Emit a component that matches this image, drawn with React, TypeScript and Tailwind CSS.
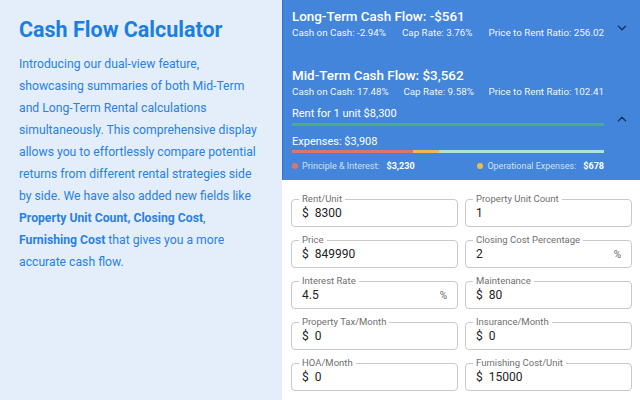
import { ChevronDown, ChevronUp } from "lucide-react";

type Field = {
  label: string;
  value: string;
  prefix?: string;
  suffix?: string;
};

const fields: Field[] = [
  { label: "Rent/Unit", value: "8300", prefix: "$" },
  { label: "Property Unit Count", value: "1" },
  { label: "Price", value: "849990", prefix: "$" },
  { label: "Closing Cost Percentage", value: "2", suffix: "%" },
  { label: "Interest Rate", value: "4.5", suffix: "%" },
  { label: "Maintenance", value: "80", prefix: "$" },
  { label: "Property Tax/Month", value: "0", prefix: "$" },
  { label: "Insurance/Month", value: "0", prefix: "$" },
  { label: "HOA/Month", value: "0", prefix: "$" },
  { label: "Furnishing Cost/Unit", value: "15000", prefix: "$" },
];

function Stats({ coc, cap, ptr }: { coc: string; cap: string; ptr: string }) {
  return (
    <div className="flex justify-between text-[9.8px] leading-[12px] text-white/95">
      <span>Cash on Cash: {coc}</span>
      <span>Cap Rate: {cap}</span>
      <span>Price to Rent Ratio: {ptr}</span>
    </div>
  );
}

function OutlinedField({ field }: { field: Field }) {
  return (
    <div className="relative flex h-[28px] items-center rounded-[4px] border border-[#c9c9c9] px-[10px] text-[12px] text-[#222]">
      <span className="absolute -top-[7px] left-[7px] bg-white px-[3px] text-[9.5px] leading-[12px] text-[#6f6f6f]">
        {field.label}
      </span>
      {field.prefix && <span className="mr-[6px]">{field.prefix}</span>}
      <span className="flex-1">{field.value}</span>
      {field.suffix && <span className="text-[10px] text-[#666]">{field.suffix}</span>}
    </div>
  );
}

export default function App() {
  return (
    <div
      className="flex h-[400px] w-[640px] overflow-hidden"
      style={{ fontFamily: "Roboto, 'Noto Sans', sans-serif" }}
    >
      <div className="w-[282px] shrink-0 bg-[#e3eefa] pl-[19px] pt-[14px]">
        <h1 className="text-[21.5px] font-bold leading-[32px] text-[#1b7fe2]">Cash Flow Calculator</h1>
        <p className="mt-[7px] w-[242px] text-[12.2px] leading-[22px] text-[#2b80e2]">
          Introducing our dual-view feature, showcasing summaries of both Mid-Term and Long-Term
          Rental calculations simultaneously. This comprehensive display allows you to effortlessly
          compare potential returns from different rental strategies side by side. We have also
          added new fields like <b className="font-bold">Property Unit Count, Closing Cost</b>,{" "}
          <b className="font-bold">Furnishing Cost</b> that gives you a more accurate cash flow.
        </p>
      </div>

      <div className="flex flex-1 flex-col">
        <div className="border-l border-[#3673c9] bg-[#4485dc]">
          <div className="flex h-[55px]">
            <div className="w-[321px] pl-[9px] pt-[9px]">
              <div className="text-[13.4px] font-medium leading-[16px] text-white">
                Long-Term Cash Flow: -$561
              </div>
              <div className="mt-[2px]">
                <Stats coc="-2.94%" cap="3.76%" ptr="256.02" />
              </div>
            </div>
            <div className="flex flex-1 items-center justify-center">
              <ChevronDown className="h-[14px] w-[14px] text-[#1d3557]" strokeWidth={2.5} />
            </div>
          </div>

          <div className="flex h-[125px]">
            <div className="w-[321px] pl-[9px] pt-[13px]">
              <div className="text-[13.4px] font-medium leading-[16px] text-white">
                Mid-Term Cash Flow: $3,562
              </div>
              <div className="mt-[2px]">
                <Stats coc="17.48%" cap="9.58%" ptr="102.41" />
              </div>
              <div className="mt-[10px] text-[11px] leading-[12px] text-white">Rent for 1 unit $8,300</div>
              <div className="mt-[3px] h-[3px] bg-[#4fa98a]" />
              <div className="mt-[10px] text-[11px] leading-[12px] text-white">Expenses: $3,908</div>
              <div className="mt-[2px] flex h-[3px]">
                <div className="w-[38.9%] bg-[#e0736a]" />
                <div className="w-[8.2%] bg-[#f2b84b]" />
                <div className="flex-1 bg-[#b4e0dc]" />
              </div>
              <div className="mt-[7px] flex items-center justify-between text-[9px] leading-[12px]">
                <div className="flex items-center gap-[4px]">
                  <span className="h-[6px] w-[6px] rounded-full bg-[#e0736a]" />
                  <span className="text-white/75">Principle &amp; Interest:</span>
                  <span className="ml-[3px] font-bold text-white">$3,230</span>
                </div>
                <div className="flex items-center gap-[4px]">
                  <span className="h-[6px] w-[6px] rounded-full bg-[#f2b84b]" />
                  <span className="text-white/75">Operational Expenses:</span>
                  <span className="ml-[3px] font-bold text-white">$678</span>
                </div>
              </div>
            </div>
            <div className="flex flex-1 items-center justify-center pt-[3px]">
              <ChevronUp className="h-[14px] w-[14px] text-[#1d3557]" strokeWidth={2.5} />
            </div>
          </div>
        </div>

        <div className="grid flex-1 grid-cols-2 content-start gap-x-[7px] gap-y-[13px] bg-white pl-[9px] pr-[8px] pt-[19px]">
          {fields.map((f) => (
            <OutlinedField key={f.label} field={f} />
          ))}
        </div>
      </div>
    </div>
  );
}
